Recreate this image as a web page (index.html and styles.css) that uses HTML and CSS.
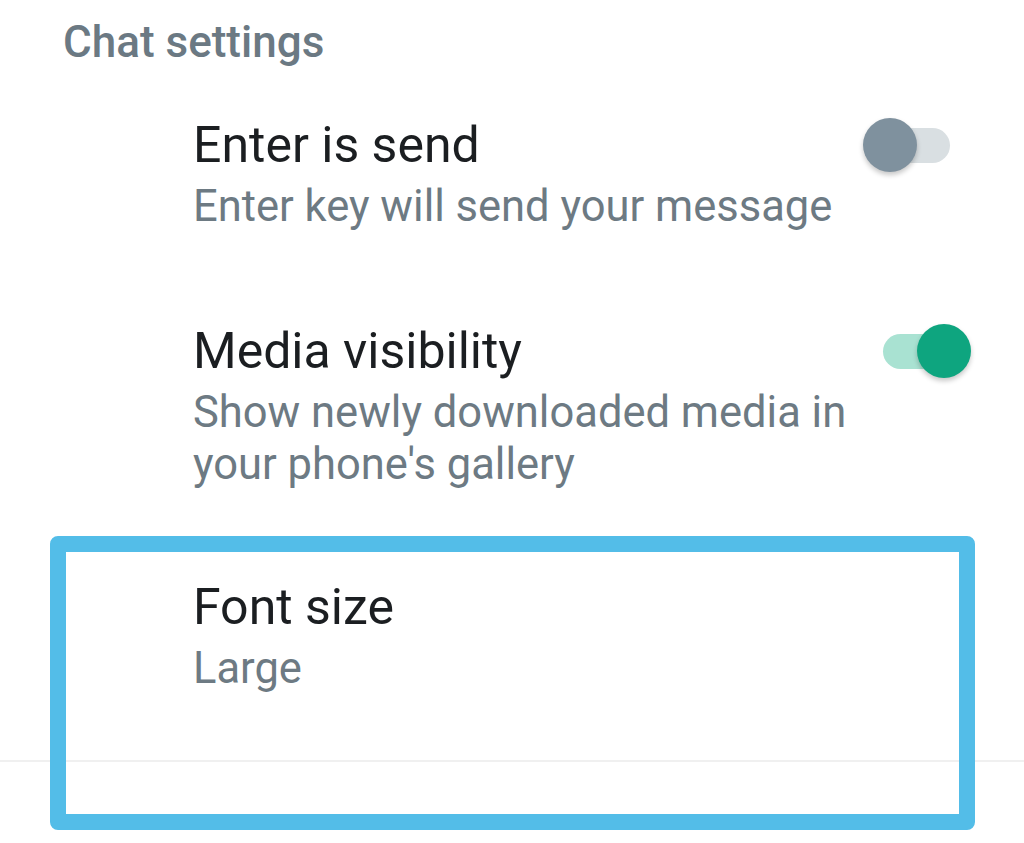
FILE: index.html
```html
<!DOCTYPE html>
<html lang="en">

<head>
    <meta charset="UTF-8" />
    <meta name="viewport" content="width=device-width, initial-scale=1.0" />
    <title>Chat settings</title>
    <link rel="stylesheet" href="styles.css">
</head>

<body>
    <h2 class="section-title">Chat settings</h2>

    <div class="pref first">
        <div class="pref-head">
            <p class="pref-title">Enter is send</p>
            <div class="switch">
                <span class="track"></span>
                <span class="knob"></span>
            </div>
        </div>
        <p class="pref-summary">Enter key will send your message</p>
    </div>

    <div class="pref">
        <div class="pref-head">
            <p class="pref-title">Media visibility</p>
            <div class="switch on">
                <span class="track"></span>
                <span class="knob"></span>
            </div>
        </div>
        <p class="pref-summary">Show newly downloaded media in<br>your phone's gallery</p>
    </div>

    <div class="pref last">
        <div class="pref-head">
            <p class="pref-title">Font size</p>
        </div>
        <p class="pref-summary">Large</p>
    </div>

    <div class="divider"></div>

    <!-- highlight frame over the font size row -->
    <div class="highlight"></div>
</body>

</html>
```

FILE: styles.css
```css
body {
    margin: 0;
    padding-top: 17px;
    background-color: #ffffff;
    font-family: Roboto, "Noto Sans", sans-serif;
    position: relative;
    height: 843px;
    overflow: hidden;
}

p {
    margin: 0;
}

.section-title {
    margin: 0;
    padding-left: 63px;
    font-size: 44px;
    line-height: 50px;
    font-weight: 500;
    color: #6b7983;
}

.pref {
    padding-left: 193px;
    padding-right: 53px;
    margin-top: 89px;
}

.pref.first {
    margin-top: 49px;
}

.pref.last {
    margin-top: 87px;
    padding-bottom: 65px;
}

.pref-head {
    display: flex;
    align-items: center;
    justify-content: space-between;
}

.pref-title {
    font-size: 50px;
    line-height: 58px;
    font-weight: 400;
    color: #1b1e21;
}

.pref-summary {
    margin-top: 7px;
    font-size: 43.5px;
    line-height: 52px;
    color: #6d7a83;
}

.switch {
    position: relative;
    width: 108px;
    height: 54px;
}

.switch .track {
    position: absolute;
    left: 18px;
    top: 10px;
    width: 69px;
    height: 35px;
    border-radius: 18px;
    background-color: #d9dfe2;
}

.switch .knob {
    position: absolute;
    left: 0;
    top: 0;
    width: 54px;
    height: 54px;
    border-radius: 50%;
    background-color: #7f919e;
    box-shadow: 0 3px 5px rgba(0, 0, 0, 0.22);
}

.switch.on .track {
    left: 20px;
    background-color: #a9e2d2;
}

.switch.on .knob {
    left: 54px;
    background-color: #0ea57f;
}

.divider {
    height: 2px;
    background-color: #f0f0f0;
}

.highlight {
    position: absolute;
    left: 50px;
    top: 536px;
    width: 893px;
    height: 262px;
    border: 16px solid #53bde8;
    border-radius: 8px;
}
```
